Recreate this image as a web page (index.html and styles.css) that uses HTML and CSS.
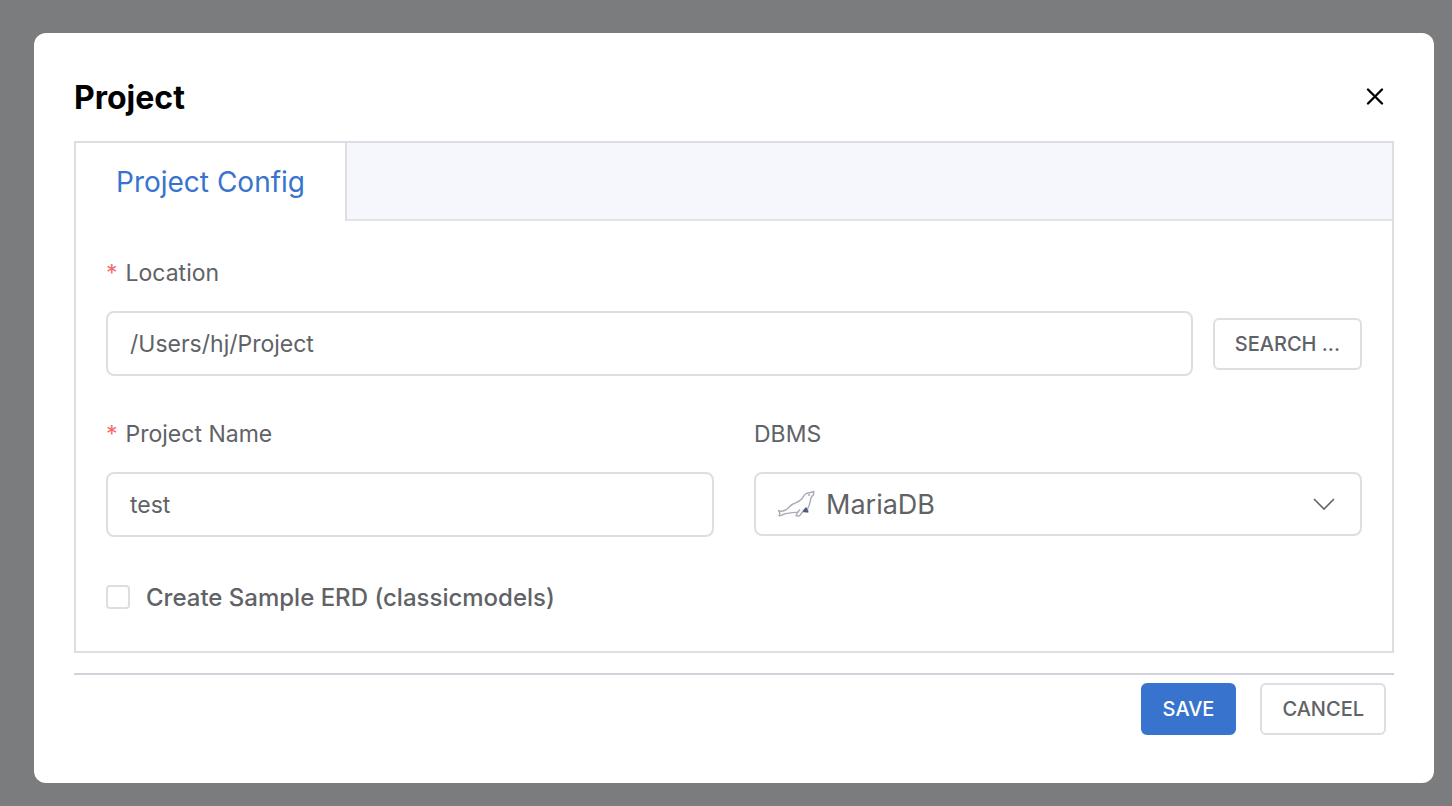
FILE: index.html
```
<!DOCTYPE html>
<html lang="en">
<head>
    <meta charset="UTF-8">
    <meta name="viewport" content="width=device-width, initial-scale=1.0">
    <title>Project</title>
    <link rel="stylesheet" href="styles.css">
</head>
<body>

    <div class="dialog" role="dialog" aria-labelledby="dialog-title">
        <div class="dialog-header">
            <h1 id="dialog-title">Project</h1>
            <button type="button" class="close" aria-label="Close">
                <svg width="18" height="18" viewBox="0 0 18 18" fill="none" stroke="currentColor" stroke-width="2.3" stroke-linecap="round">
                    <path d="M2 1.500 L16 15.500 M16 1.500 L2 15.500"/>
                </svg>
            </button>
        </div>

        <form>
            <div class="tabs">
                <div class="tab-bar">
                    <button type="button" class="tab">Project Config</button>
                </div>

                <div class="tab-content">
                    <div class="field">
                        <label for="location"><span class="required">*</span>Location</label>
                        <div class="input-row">
                            <input type="text" id="location" class="text-input" value="/Users/hj/Project">
                            <button type="button" class="btn">SEARCH ...</button>
                        </div>
                    </div>

                    <div class="columns">
                        <div class="field">
                            <label for="name"><span class="required">*</span>Project Name</label>
                            <input type="text" id="name" class="text-input" value="test">
                        </div>
                        <div class="field">
                            <label for="dbms">DBMS</label>
                            <div class="select-box">
                                <select id="dbms">
                                    <option>MariaDB</option>
                                </select>
                                <svg class="logo" width="38" height="28" viewBox="0 0 38 28" fill="#fdfdfe" stroke="#a9acb8" stroke-width="1.4" stroke-linejoin="round" stroke-linecap="round">
                                    <path d="M1.500 20.500 C4 22 7 21 9.700 19.300 C12 17.500 13 15.500 16 14 C19.500 12.300 22.500 11.500 24.700 9 C26.500 7 27 4 29.500 3.300 C32 2.800 34.500 2.600 36.800 1.500 L36.500 4.800 C35 5.800 34.200 6.800 33.800 8.500 C33.200 11.500 33 15 30.500 19 L31 22 L26 21.500 C25 22 24.500 23.500 23.500 24.800 C22.500 26.200 20 26.300 19 25.500 L20.500 22.500 C16 22 11 23.500 7.500 24 C5.500 24.500 4.500 26 2 25.800 L3 23.500 Z"/>
                                    <path d="M20.500 22.500 L22.500 20 M31.500 5 h1"/>
                                    <path d="M26.500 21 L29 18 L30.500 21.700 Z" fill="#4d5a75" stroke="#4d5a75"/>
                                </svg>
                                <svg class="arrow" width="22" height="14" viewBox="0 0 22 14" fill="none" stroke="#606266" stroke-width="1.6">
                                    <path d="M1 2 L11 12 L21 2"/>
                                </svg>
                            </div>
                        </div>
                    </div>

                    <div class="check-row">
                        <input type="checkbox" id="sample">
                        <label for="sample">Create Sample ERD (classicmodels)</label>
                    </div>
                </div>
            </div>

            <div class="dialog-footer">
                <button type="submit" class="btn btn-primary">SAVE</button>
                <button type="button" class="btn">CANCEL</button>
            </div>
        </form>
    </div>

</body>
</html>
```

FILE: styles.css
```
* {
    box-sizing: border-box;
}
body {
    margin: 0;
    padding: 33px 18px 23px 34px;
    min-height: 100vh;
    background-color: #7b7c7d;
    color: #606266;
    font-family: Inter, "Liberation Sans", sans-serif;
    font-size: 23px;
}
button, input, select {
    font-family: inherit;
    color: inherit;
}
.dialog {
    background-color: white;
    border-radius: 12px;
    padding: 40px 40px 48px;
}
.dialog-header {
    display: flex;
    justify-content: space-between;
    align-items: center;
    height: 48px;
    margin-bottom: 20px;
}
h1 {
    margin: 0;
    color: #000;
    font-size: 32px;
    font-weight: 700;
}
.close {
    display: flex;
    padding: 10px;
    border: none;
    background: none;
    color: #000;
    cursor: pointer;
}
.tabs {
    border: 2px solid #dddde4;
}
.tab-bar {
    height: 78px;
    background-color: #f5f7fc;
    border-bottom: 2px solid #e2e3ea;
}
.tab {
    height: 78px;
    padding: 0 40px;
    border: none;
    border-right: 2px solid #dddde4;
    background-color: white;
    color: #3874cd;
    font-size: 28px;
    font-weight: 400;
    cursor: pointer;
}
.tab-content {
    display: flex;
    flex-direction: column;
    gap: 36px;
    padding: 30px;
}
.field {
    flex: 1;
    display: flex;
    flex-direction: column;
    gap: 16px;
}
.field label {
    line-height: 44px;
}
.required {
    color: #f56c6c;
    margin-right: 8px;
}
.input-row {
    display: flex;
    align-items: center;
    gap: 20px;
}
.text-input {
    width: 100%;
    height: 65px;
    padding: 0 22px;
    border: 2px solid #dddde4;
    border-radius: 8px;
    background-color: white;
    font-size: 23px;
}
.columns {
    display: flex;
    gap: 40px;
}
.select-box {
    position: relative;
}
select {
    appearance: none;
    display: block;
    width: 100%;
    height: 64px;
    padding: 0 70px;
    border: 2px solid #dddde4;
    border-radius: 8px;
    background-color: white;
    font-size: 27px;
}
.logo, .arrow {
    position: absolute;
    top: 50%;
    transform: translateY(-50%);
    pointer-events: none;
}
.logo {
    left: 23px;
}
.arrow {
    right: 27px;
}
.check-row {
    display: flex;
    align-items: center;
    gap: 16px;
    height: 48px;
    font-size: 24px;
    font-weight: 500;
}
.check-row input {
    appearance: none;
    width: 24px;
    height: 24px;
    margin: 0;
    border: 2px solid #dddde4;
    border-radius: 4px;
}
.check-row input:checked {
    background-color: #3874cd;
    border-color: #3874cd;
}
.btn {
    flex: none;
    height: 52px;
    padding: 0 20px;
    border: 2px solid #dddde4;
    border-radius: 6px;
    background-color: white;
    font-size: 20px;
    font-weight: 500;
    cursor: pointer;
}
.btn-primary {
    background-color: #3874cd;
    border-color: #3874cd;
    color: white;
}
.dialog-footer {
    display: flex;
    justify-content: flex-end;
    gap: 24px;
    margin-top: 20px;
    padding: 8px 8px 0;
    border-top: 2px solid #d0d3da;
}
```
